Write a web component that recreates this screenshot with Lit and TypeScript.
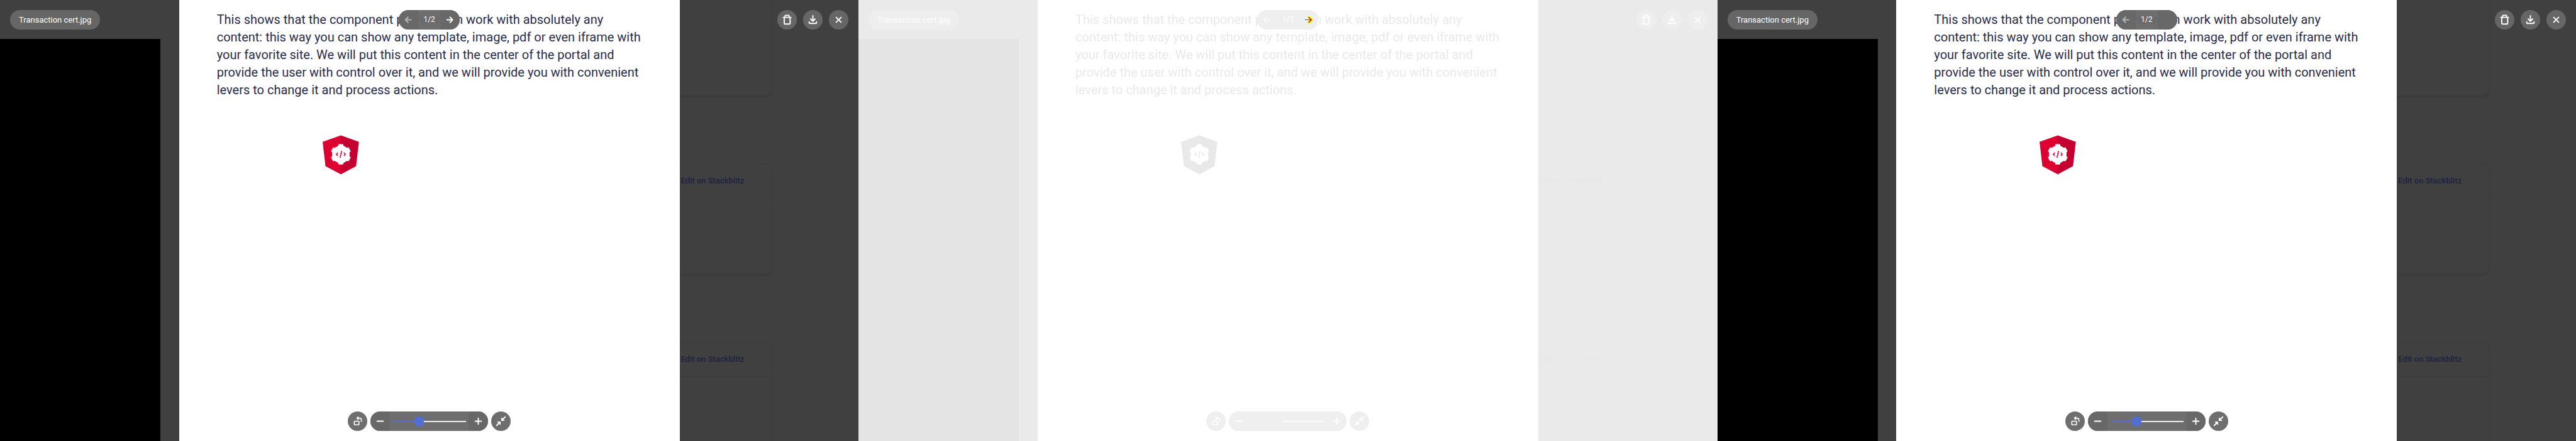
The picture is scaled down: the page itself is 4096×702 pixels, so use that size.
import { LitElement, html, css, svg, nothing } from "lit";
import { customElement, property } from "lit/decorators.js";
import { classMap } from "lit/directives/class-map.js";

const icon = (content: unknown) => html`
  <svg viewBox="0 0 96 96" width="31" height="31" fill="none" stroke="currentColor" stroke-width="6" stroke-linecap="round" stroke-linejoin="round" aria-hidden="true">${content}</svg>`;

const icons = {
  trash: svg`<path d="M29 36H67M38 35V29Q38 26 41 26H55Q58 26 58 29V35M34 37V65Q34 69 38 69H59Q63 69 63 65V37"/>`,
  download: svg`<path d="M48 28V54M37 44L48 55L59 44M30 58V63Q30 66 33 66H63Q66 66 66 63V58"/>`,
  close: svg`<path d="M36 36L60 60M60 36L36 60"/>`,
  left: svg`<path d="M61 48H33M46 35L33 48L46 61"/>`,
  right: svg`<path d="M33 48H61M48 35L61 48L48 61"/>`,
  minus: svg`<path d="M33 48H63"/>`,
  plus: svg`<path d="M33 48H63M48 33V63"/>`,
  rotate: svg`<g stroke-width="5"><rect x="32" y="48" width="23" height="18" rx="2"/><path d="M51 27L45 33L51 39M46 33H58Q67 33 67 42V49"/></g>`,
  collapse: svg`<path d="M69 27L56 40M27 69L40 56"/><path d="M51 32V45H64ZM32 51H45V64Z" fill="currentColor" stroke-width="3"/>`,
};

@customElement("preview-panel")
class PreviewPanel extends LitElement {
  @property({ type: Boolean }) faded = false;
  @property({ type: Boolean }) last = false;

  static styles = css`
    :host {
      display: grid;
      background: #fff;
      min-width: 0;
      overflow: hidden;
      font-family: Roboto, "Liberation Sans", sans-serif;
    }
    .stage,
    .marker {
      grid-area: 1 / 1;
    }
    .stage {
      display: grid;
      min-height: 0;
      background: #404040;
    }
    .stage > * {
      grid-area: 1 / 1;
    }
    .faded {
      filter: grayscale(1);
      opacity: 0.1;
    }
    .behind {
      display: grid;
      grid-template-columns: 255px 1fr;
      min-height: 0;
      overflow: hidden;
    }
    .side {
      margin-top: 62px;
      background: #000;
    }
    .cards {
      display: flex;
      flex-direction: column;
      gap: 107px;
      min-height: 0;
      padding: 0 137px 0 60px;
    }
    .card {
      box-sizing: border-box;
      flex: none;
      height: 177px;
      border: 1px solid #3b3b3b;
      border-radius: 12px;
      box-shadow: 0 2px 2px #3b3b3b;
    }
    .card.cut {
      height: 153px;
      border-top: 0;
      border-radius: 0 0 12px 12px;
    }
    .card-head {
      box-sizing: border-box;
      display: flex;
      align-items: center;
      justify-content: flex-end;
      height: 55px;
      padding-right: 44px;
      border-bottom: 1px solid #3b3b3b;
    }
    .cut .card-head {
      height: 4px;
    }
    .card-head a {
      color: #1c2142;
      font-size: 13px;
      font-weight: 500;
      line-height: 20px;
      text-decoration: none;
    }
    .page {
      justify-self: center;
      box-sizing: border-box;
      width: 58.3%;
      padding: 17px 60px;
      background: #fff;
      color: #292d4c;
    }
    .page p {
      margin: 0;
      font-size: 20px;
      line-height: 28px;
    }
    .logo {
      display: block;
      width: 58px;
      height: 63px;
      margin: 58px 0 0 168px;
    }
    .top,
    .bottom {
      display: flex;
      box-sizing: border-box;
      width: 100%;
      padding: 16px;
      color: #fff;
    }
    .top {
      align-self: start;
      display: grid;
      grid-template-columns: 1fr auto 1fr;
    }
    .bottom {
      align-self: end;
      justify-content: center;
      gap: 5px;
    }
    .title {
      justify-self: start;
      padding: 0 14px;
      border-radius: 16px;
      background: rgba(104, 104, 104, 0.96);
      font-size: 13px;
      line-height: 31px;
    }
    .group {
      display: flex;
      overflow: hidden;
      border-radius: 16px;
      background: rgba(104, 104, 104, 0.96);
    }
    .actions {
      display: flex;
      justify-self: end;
      gap: 10px;
    }
    button {
      display: block;
      width: 31px;
      height: 31px;
      padding: 0;
      border: 0;
      border-radius: 50%;
      background: rgba(104, 104, 104, 0.96);
      color: #fff;
    }
    button svg {
      display: block;
    }
    .group button {
      border-radius: 0;
    }
    button:disabled svg {
      opacity: 0.5;
    }
    .count {
      width: 35px;
      font-size: 12px;
      line-height: 31px;
      text-align: center;
    }
    .zoom {
      display: flex;
      align-items: center;
      width: 117px;
      padding: 0 4px;
    }
    input {
      appearance: none;
      width: 100%;
      height: 16px;
      margin: 0;
      background: linear-gradient(90deg, #526ed3 36%, #ededed 36%) center / 100% 2px no-repeat;
    }
    input::-webkit-slider-thumb {
      appearance: none;
      width: 16px;
      height: 16px;
      border-radius: 50%;
      background: #526ed3;
    }
    .marker {
      display: flex;
      justify-content: flex-end;
      align-self: start;
      justify-self: center;
      width: 97px;
      margin-top: 16px;
      z-index: 1;
    }
    .marker .halo {
      stroke: #ff0;
      stroke-width: 12;
    }
    .marker .core {
      stroke: #f00;
      stroke-width: 6;
    }
  `;

  private card(cut: boolean) {
    return html`
      <section class=${classMap({ card: true, cut })}>
        <div class="card-head">${cut ? nothing : html`<a href="#stackblitz">Edit on Stackblitz</a>`}</div>
      </section>`;
  }

  render() {
    return html`
      <div class=${classMap({ stage: true, faded: this.faded })}>
        <div class="behind">
          <div class="side"></div>
          <div class="cards">${this.card(true)}${this.card(false)}${this.card(false)}</div>
        </div>
        <article class="page">
          <p>
            This shows that the component preview can work with absolutely any<br />
            content: this way you can show any template, image, pdf or even iframe with<br />
            your favorite site. We will put this content in the center of the portal and<br />
            provide the user with control over it, and we will provide you with convenient<br />
            levers to change it and process actions.
          </p>
          <svg class="logo" viewBox="46 32 180 193" aria-hidden="true">
            <path d="M136 32L46 64L60 184L136 225Z" fill="#dd0031" />
            <path d="M136 32L225 64L211 184L136 225Z" fill="#c3002f" />
            <g fill="#fff">
              <path d="M136 76L179 101V151L136 176L93 151V101Z" />
              ${[0, 60, 120].map((a) => svg`<rect x="124" y="76" width="24" height="100" rx="2" transform=${`rotate(${a} 136 126)`} />`)}
            </g>
            <path d="M121 118L114 126L121 134M140 109L132 143M151 118L158 126L151 134" fill="none" stroke="#dd0031" stroke-width="5" />
          </svg>
        </article>
        <header class="top">
          <span class="title">Transaction cert.jpg</span>
          <div class="group">
            <button aria-label="Previous" disabled>${icon(icons.left)}</button>
            <span class="count">1/2</span>
            <button aria-label="Next">${this.last ? nothing : icon(icons.right)}</button>
          </div>
          <div class="actions">
            <button aria-label="Delete">${icon(icons.trash)}</button>
            <button aria-label="Download">${icon(icons.download)}</button>
            <button aria-label="Close">${icon(icons.close)}</button>
          </div>
        </header>
        <footer class="bottom">
          <button aria-label="Rotate">${icon(icons.rotate)}</button>
          <div class="group">
            <button aria-label="Zoom out">${icon(icons.minus)}</button>
            <div class="zoom"><input type="range" min="0" max="100" .value=${"34"} aria-label="Zoom" /></div>
            <button aria-label="Zoom in">${icon(icons.plus)}</button>
          </div>
          <button aria-label="Fit to screen">${icon(icons.collapse)}</button>
        </footer>
      </div>
      ${this.faded
        ? html`<div class="marker">
            <svg viewBox="0 0 96 96" width="31" height="31" fill="none" shape-rendering="crispEdges" aria-hidden="true">
              <path class="halo" d="M46 32L63 48L46 64" />
              <path class="core" d="M31 48H62M48 34L62 48L48 62" />
            </svg>
          </div>`
        : nothing}
    `;
  }
}

@customElement("app-root")
class AppRoot extends LitElement {
  static styles = css`
    :host {
      display: grid;
      grid-template-columns: repeat(3, 1fr);
      grid-template-rows: 100vh;
      overflow: hidden;
    }
  `;

  render() {
    return html`
      <preview-panel></preview-panel>
      <preview-panel faded></preview-panel>
      <preview-panel last></preview-panel>
    `;
  }
}
